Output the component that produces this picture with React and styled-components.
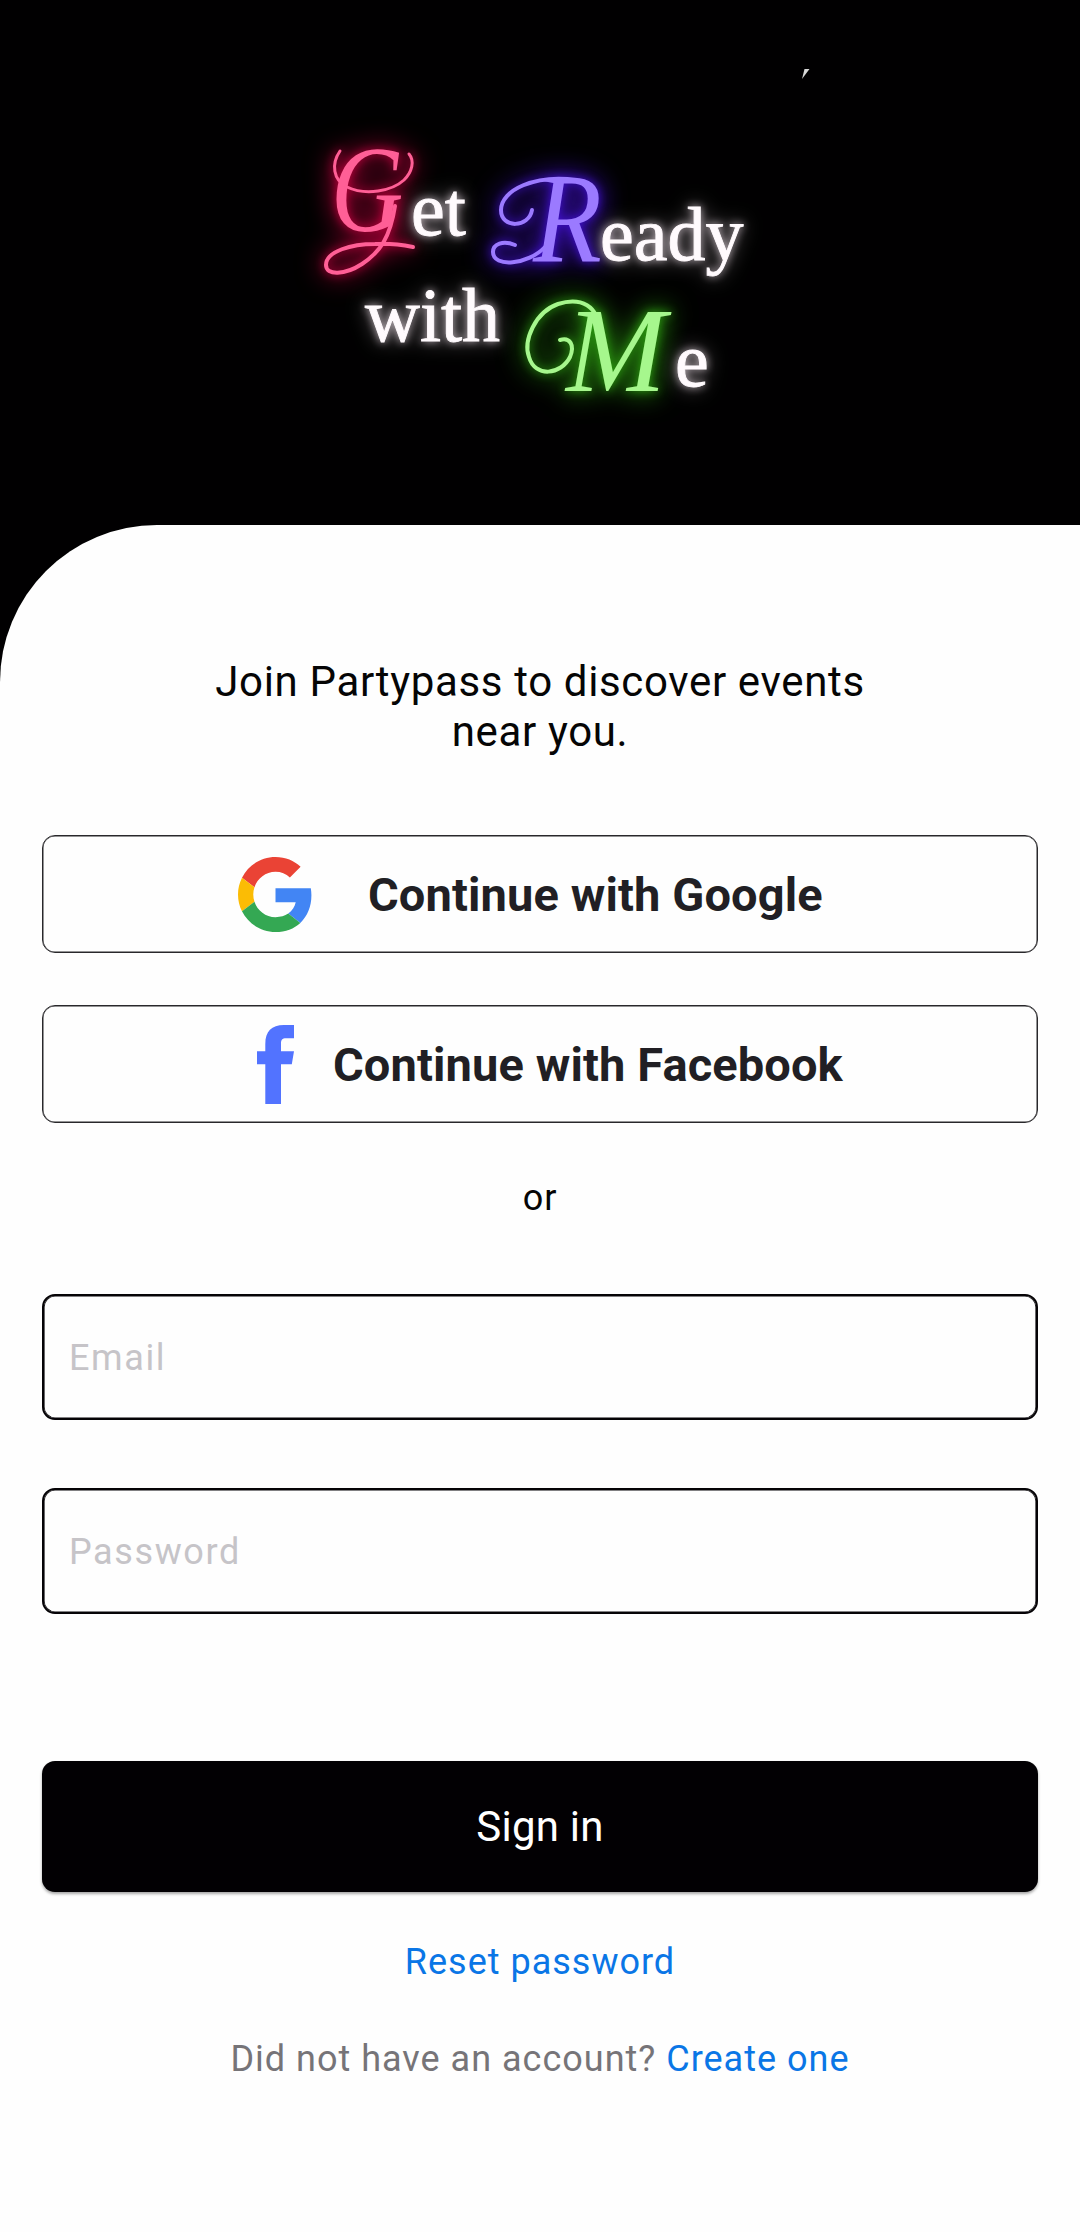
import React from "react";
import styled, { createGlobalStyle, css } from "styled-components";

const GlobalStyle = createGlobalStyle`
  * { box-sizing: border-box; }
  body { margin: 0; background: #000; }
`;

const Screen = styled.main`
  display: flex;
  flex-direction: column;
  width: 1080px;
  height: 2232px;
  background: #010001;
  color: #050505;
  font-family: Roboto, sans-serif;
`;

const Header = styled.header`
  height: 525px;
  flex: none;
`;

const Artwork = styled.svg`
  display: block;
  width: 1080px;
  height: 525px;
`;

const Word = styled.text`
  font-family: "Liberation Serif", serif;
  font-size: 76px;
  fill: #fffafd;
  stroke: #fffafd;
  stroke-width: 0.9px;
  filter: drop-shadow(0 0 4px rgba(255, 240, 250, 0.7)) drop-shadow(0 0 10px rgba(255, 240, 250, 0.35));
`;

const Neon = styled.g`
  color: ${(p) => p.$color};
  filter: drop-shadow(0 0 5px ${(p) => p.$glow}) drop-shadow(0 0 13px ${(p) => p.$glow});
`;

const Capital = styled.text`
  font-family: "Liberation Serif", serif;
  font-style: italic;
  font-size: ${(p) => p.$size}px;
  fill: currentColor;
`;

const Flourish = styled.path`
  fill: none;
  stroke: currentColor;
  stroke-width: ${(p) => p.$weight || 4}px;
  stroke-linecap: round;
`;

const Panel = styled.section`
  flex: 1;
  display: flex;
  flex-direction: column;
  padding: 132px 42px 0;
  background: #fefefe;
  border-top-left-radius: 157px;
`;

const Heading = styled.h1`
  margin: 0 auto;
  width: 700px;
  font-size: 42px;
  font-weight: 400;
  line-height: 50px;
  letter-spacing: 0.65px;
  text-align: center;
`;

const ProviderList = styled.div`
  display: flex;
  flex-direction: column;
  gap: 52px;
  margin-top: 78px;
`;

const ProviderButton = styled.button`
  display: flex;
  align-items: center;
  gap: ${(p) => p.$gap}px;
  height: 118px;
  padding: 0 0 0 ${(p) => p.$inset}px;
  border: 1px solid #29282b;
  border-radius: 13px;
  box-shadow: inset 0 0 0 0.5px #29282b;
  background: transparent;
  color: #211f24;
  font: 700 47px/56px Roboto, sans-serif;
  letter-spacing: 0.12px;
  white-space: nowrap;
  svg { flex: none; display: block; }
`;

const ProviderLabel = styled.span`
  padding-top: 2px;
`;

const Divider = styled.div`
  margin-top: 54px;
  font-size: 36px;
  line-height: 42px;
  letter-spacing: 1px;
  text-align: center;
`;

const Fields = styled.div`
  display: flex;
  flex-direction: column;
  gap: 68px;
  margin-top: 75px;
`;

const Field = styled.input`
  height: 126px;
  padding: 1px 25px 0;
  border: 2px solid #050306;
  border-radius: 13px;
  box-shadow: inset 0 0 0 0.6px #050306;
  outline: none;
  background: transparent;
  font: 400 36px/42px Roboto, sans-serif;
  letter-spacing: 1.6px;
  &::placeholder { color: #c6c4c8; opacity: 1; }
`;

const SubmitButton = styled.button`
  height: 131px;
  margin-top: 147px;
  border: 0;
  border-radius: 13px;
  background: #020003;
  color: #fff;
  font: 400 42px/50px Roboto, sans-serif;
  letter-spacing: 0.25px;
  box-shadow: 0 2px 3px rgba(0, 0, 0, 0.35);
`;

const smallText = css`
  font-size: 36px;
  line-height: 42px;
  letter-spacing: 1px;
`;

const Link = styled.a`
  color: #0a76e6;
`;

const ResetRow = styled.p`
  ${smallText}
  margin: 49px 0 0;
  text-align: center;
`;

const SignUpRow = styled.p`
  ${smallText}
  margin: 55px 0 0;
  color: #767478;
  text-align: center;
`;

function NeonLogo() {
  return (
    <Artwork viewBox="0 0 1080 525">
      <path d="M804.500 69h5l-7.500 10z" fill="#d8d8d8" />
      <Neon $color="#ff5f96" $glow="#c4003f">
        <Capital $size={122} transform="translate(331 231) scale(0.82 1)">G</Capital>
        <Flourish $weight={3} d="M340 151C331 164 333 180 347 187C366 196 392 191 404 180C412 172 415 161 409 154" />
        <Flourish $weight={4} d="M395 206C390 238 380 252 362 264C345 275 326 276 326 265C326 251 352 244 375 244C391 243 403 245 413 247" />
      </Neon>
      <Word x="411" y="235">et</Word>
      <Neon $color="#9b7aff" $glow="#4310d6">
        <Capital $size={128} transform="translate(533 262) scale(0.88 1)">R</Capital>
        <Flourish $weight={4} d="M577 180C535 174 501 190 501 210C501 229 529 228 532 210" />
        <Flourish $weight={4} d="M545 247C528 265 493 268 493 252C493 244 503 240 515 245" />
      </Neon>
      <Word x="600" y="260">eady</Word>
      <Word x="365" y="341">with</Word>
      <Neon $color="#a6f78d" $glow="#2c9d10">
        <Capital $size={120} x="566" y="391">M</Capital>
        <Flourish $weight={4} d="M598 332C600 305 580 297 558 304C535 312 523 341 529 357C535 378 561 375 570 357C575 345 570 337 560 340" />
      </Neon>
      <Word x="675" y="386">e</Word>
    </Artwork>
  );
}

function GoogleMark() {
  return (
    <svg width="75" height="75" viewBox="0 0 48 48">
      <path fill="#EA4335" d="M24 9.5c3.54 0 6.71 1.22 9.21 3.6l6.85-6.85C35.9 2.38 30.47 0 24 0 14.62 0 6.51 5.38 2.56 13.22l7.98 6.19C12.43 13.72 17.74 9.5 24 9.5z" />
      <path fill="#4285F4" d="M46.98 24.55c0-1.57-.15-3.09-.38-4.55H24v9.02h12.94c-.58 2.96-2.26 5.48-4.78 7.18l7.73 6c4.51-4.18 7.09-10.36 7.09-17.65z" />
      <path fill="#FBBC05" d="M10.53 28.59c-.48-1.45-.76-2.99-.76-4.59s.27-3.14.76-4.59l-7.98-6.19C.92 16.46 0 20.12 0 24c0 3.88.92 7.54 2.56 10.78l7.97-6.19z" />
      <path fill="#34A853" d="M24 48c6.48 0 11.93-2.13 15.89-5.81l-7.73-6c-2.15 1.45-4.92 2.3-8.16 2.3-6.26 0-11.57-4.22-13.47-9.91l-7.98 6.19C6.51 42.62 14.62 48 24 48z" />
    </svg>
  );
}

function FacebookMark() {
  return (
    <svg width="37" height="79" viewBox="0 0 37 79">
      <path fill="#5273ff" d="M37 0v13.3h-8c-3.8 0-5 1.6-5 5.4v7.6h13l-2.2 13H24V79H8.3V39.3H0v-13h8.3V19C8.3 6.500 14.500 0 27 0z" />
    </svg>
  );
}

export default function App() {
  return (
    <>
      <GlobalStyle />
      <Screen>
        <Header>
          <NeonLogo />
        </Header>
        <Panel>
          <Heading>
            Join Partypass to discover events
            <br />
            near you.
          </Heading>
          <ProviderList>
            <ProviderButton $inset={195} $gap={55}>
              <GoogleMark />
              <ProviderLabel>Continue with Google</ProviderLabel>
            </ProviderButton>
            <ProviderButton $inset={214} $gap={39}>
              <FacebookMark />
              <ProviderLabel>Continue with Facebook</ProviderLabel>
            </ProviderButton>
          </ProviderList>
          <Divider>or</Divider>
          <Fields>
            <Field type="email" placeholder="Email" />
            <Field type="password" placeholder="Password" />
          </Fields>
          <SubmitButton>Sign in</SubmitButton>
          <ResetRow>
            <Link>Reset password</Link>
          </ResetRow>
          <SignUpRow>
            Did not have an account? <Link>Create one</Link>
          </SignUpRow>
        </Panel>
      </Screen>
    </>
  );
}
